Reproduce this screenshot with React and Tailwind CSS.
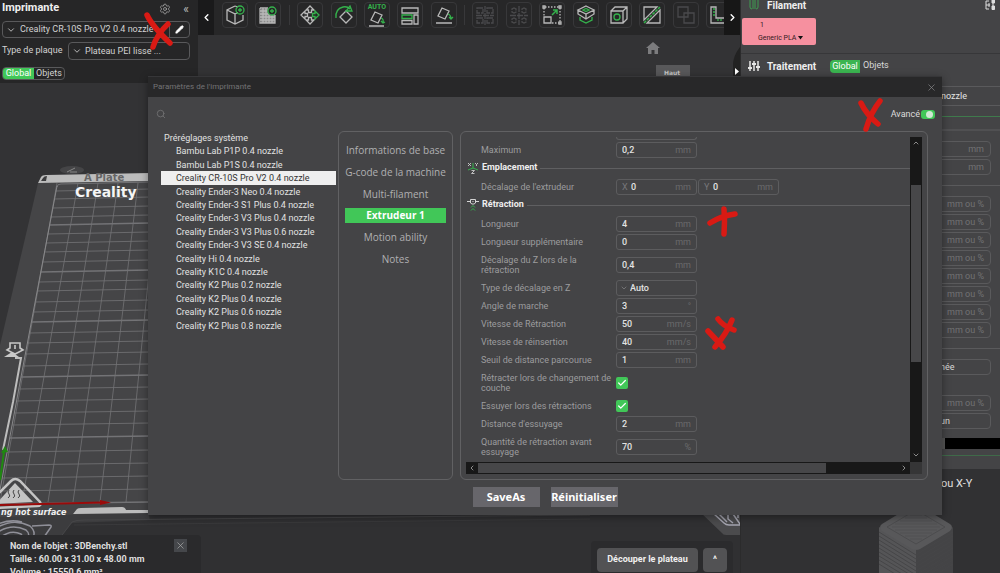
import { Check, ChevronDown, ChevronLeft, ChevronRight, ChevronUp, Pencil, Search, Settings, X } from "lucide-react";

const presets = [
  "Bambu Lab P1P 0.4 nozzle",
  "Bambu Lab P1S 0.4 nozzle",
  "Creality CR-10S Pro V2 0.4 nozzle",
  "Creality Ender-3 Neo 0.4 nozzle",
  "Creality Ender-3 S1 Plus 0.4 nozzle",
  "Creality Ender-3 V3 Plus 0.4 nozzle",
  "Creality Ender-3 V3 Plus 0.6 nozzle",
  "Creality Ender-3 V3 SE 0.4 nozzle",
  "Creality Hi 0.4 nozzle",
  "Creality K1C 0.4 nozzle",
  "Creality K2 Plus 0.2 nozzle",
  "Creality K2 Plus 0.4 nozzle",
  "Creality K2 Plus 0.6 nozzle",
  "Creality K2 Plus 0.8 nozzle",
];

const tabs = [
  "Informations de base",
  "G-code de la machine",
  "Multi-filament",
  "Extrudeur 1",
  "Motion ability",
  "Notes",
];

/* ---------- 3D VIEW ---------- */

const gridColumns = [
  [57, 0],
  [78, 22],
  [98, 48],
  [118, 73],
  [138, 100],
  [158, 126],
];

const gridRows = [
  191, 199, 208, 217, 225, 234, 243, 252, 262, 272, 282, 291, 302, 312, 322,
  333, 343, 354, 366, 377, 389, 401, 413, 425, 438, 452, 465, 478, 491, 504,
];

function Scene() {
  return (
    <svg
      className="absolute inset-0 h-full w-full"
      viewBox="0 0 740 573"
      preserveAspectRatio="xMinYMin slice"
      fill="none"
      aria-hidden="true"
    >
      <rect width="740" height="573" fill="#333335" />

      {/* printer body */}
      <path d="M0 515L740 515V573H0Z" fill="#303032" />
      <path d="M0 512H148L150 520L72 523L56 543L0 553Z" fill="#3c3c3e" />
      <path d="M56 543L72 522Q76 520 84 520L590 515" stroke="#464648" />
      <path d="M74 525L590 519" stroke="#3a3a3c" />

      {/* plate */}
      <path d="M38 183L150 181V512L0 517V345Z" fill="#454547" />
      <ellipse cx="72" cy="170" rx="12" ry="4" fill="#454547" />
      <path d="M67 172L75 168M70 172H77" stroke="#888" />
      <path d="M38 183L41 177Q42 175 46 175L150 173V181Z" fill="#bcbcbc" />
      <path d="M41 181L43 178Q44 176 47 176L46 181Z" fill="#3c3c3e" />
      <text x="84" y="181" fontFamily="DejaVu Sans" fontSize="10" fontWeight="700" fill="#666">A Plate</text>

      <g stroke="#737376" strokeWidth="0.8">
        {gridRows.map((y, i) => (
          <path
            key={y}
            d={`M${57 - (y - 183) * 0.185} ${y}L150 ${y - 2}`}
            strokeWidth={i % 5 === 4 ? 1.3 : 0.8}
          />
        ))}
        {gridColumns.map(([a, b]) => (
          <path key={a} d={`M${a} 183L${b} 502`} />
        ))}
      </g>
      <path d="M57 187Q57 184 61 184L150 182" stroke="#737376" />
      <path d="M57 186L21 377L0 490" stroke="#88888a" />
      <text x="75" y="197" fontFamily="DejaVu Sans" fontSize="14" fontWeight="700" fill="#f5f5f5">Creality</text>

      {/* lock mark on the left edge */}
      <path d="M10 343H20V348L23 350L15 354L7 350L10 348Z" stroke="#c8c8c8" strokeWidth="1.6" />
      <path d="M15 345V349" stroke="#c8c8c8" strokeWidth="1.6" />
      <path d="M4 357L12 352L19 357Z" fill="#c8c8c8" />
      <path d="M15 358H21L13 402L3 450" stroke="#bdbdbd" strokeWidth="2" />

      {/* hot surface sign */}
      <path d="M-4 496L11 481Q15 477 20 481L40 502Q42 506 37 506L-4 508" stroke="#c4c4c4" strokeWidth="2.5" />
      <path d="M15 483L33 502L-4 504Z" fill="#c4c4c4" />
      <path d="M9 490q-2 2 0 4t-1 4M14 490q-2 2 0 4t-1 4M19 490q-2 2 0 4t-1 4" stroke="#444" />
      <path d="M0 480L4 452" stroke="#1f8a10" strokeWidth="2" />
      <path d="M5 446L1 453L8 452Z" fill="#1f8a10" />
      <path d="M0 505L102 502.500" stroke="#9a0a0a" strokeWidth="2" />
      <path d="M100 500L111 502.500L100 505Z" fill="#9a0a0a" />
      <text x="1" y="515" fontFamily="DejaVu Sans" fontSize="8" fontWeight="700" fontStyle="italic" fill="#f0f0f0">ng hot surface</text>
      <path d="M73 514L77 509Q78 508 81 508L122 507Q125 507 126 510L148 510V513Z" fill="#bcbcbc" />

      {/* fingerprint */}
      <g stroke="#8f8f98" strokeWidth="1.500">
        <path d="M-2 527Q14 518 30 526Q37 532 32 540M-2 532Q12 523 26 530Q31 534 27 541M0 538Q10 529 21 534Q25 538 21 543M4 543Q10 535 17 539M-2 524Q10 519 22 522" />
        <path d="M32 526L49 525Q52 525 51 527L42 540L34 541" />
      </g>

      {/* right corner tag */}
      <path d="M700 512L722 533Q723 535 726 535H740V512Z" fill="#4b4b4d" />
      <path d="M714 514L724 523Q726 525 729 525H740M719 514L727 522M728 514V519L733 523M733 514L740 524M738 514V518" stroke="#a5a5b0" strokeWidth="1.500" />

      {/* view cube */}
      <path d="M656 65H690V78H656Z" fill="#58585a" />
      <text x="664" y="75" fontFamily="DejaVu Sans" fontSize="6" fontWeight="700" fill="#c5c5c5">Haut</text>

      {/* side handle */}
      <path d="M740 47Q733 56 733 65V78H740Z" fill="#222" />
      <path d="M735 68L739 71.500L735 75Z" fill="#fff" />
    </svg>
  );
}

/* ---------- TOOLBAR ICONS ---------- */

const icons = {
  addCube: (
    <>
      <path d="M12 3L4 7V17L12 21L20 17V12M12 3L15 4M4 7L12 11V21M12 11L15 9.500" />
      <g stroke="#35b24c"><circle cx="17" cy="7" r="4" /><path d="M17 5V9M15 7H19" /></g>
    </>
  ),
  addPlate: (
    <>
      <path d="M5 6H12V9H19V20H5Z" fill="#8c8c8c" stroke="none" />
      <path d="M4 5H12M4 5V20H19V12M4 8H11M4 11H19M4 14H19M4 17H19M7 5V20M10 5V20M13 12V20M16 12V20" />
      <circle cx="16" cy="8" r="4" fill="#272728" stroke="#35b24c" />
      <path d="M16 6V10M14 8H18" stroke="#35b24c" />
    </>
  ),
  move: (
    <>
      <path d="M12 3L16 7L13.500 7V9.500H10.500V7H8ZM12 21L8 17H10.500V14.500H13.500V17H16ZM3 12L7 8V10.500H9.500V13.500H7V16Z" />
      <path d="M21 12L17 8V10.500H14.500V13.500H17V16Z" stroke="#35b24c" />
    </>
  ),
  rotate: (
    <>
      <path d="M14 8L20 14L14 20L8 14Z" />
      <path d="M4 15Q3 6 11 4Q15 3 18 6M18 3L20 8L14 8Z" stroke="#35b24c" />
    </>
  ),
  autoOrient: (
    <>
      <path d="M10 9L17 12L13 20L6 17ZM4 23H19" />
      <path d="M16 15Q19 16 18 20M16 18L18 20L20 19" stroke="#35b24c" />
    </>
  ),
  arrange: (
    <>
      <path d="M4 5H20V10H4ZM16 12H20V21H16ZM4 17.500H14V21H4Z" />
      <path d="M4 12H14V15.500H4Z" stroke="#35b24c" />
    </>
  ),
  layFlat: (
    <>
      <path d="M10 5L17 8L13 16L6 13ZM4 20H20" />
      <path d="M16 11Q19 12 19 16M17 14L19 16L21 14" stroke="#35b24c" />
    </>
  ),
  splitObjects: (
    <path stroke="#4a4a4c" d="M4 5H10V10H4ZM14 5H20V10H14ZM4 15H10V20H4ZM14 15H20V20H14ZM12 3V22M3 12.500H21" strokeDasharray="6 1" />
  ),
  splitParts: (
    <path stroke="#4a4a4c" d="M5 6L7 5L9 6V9L7 10L5 9ZM15 6L17 5L19 6V9L17 10L15 9ZM5 16L7 15L9 16V19L7 20L5 19ZM15 16L17 15L19 16V19L17 20L15 19ZM12 3V22M3 12.500H21" strokeDasharray="6 1" />
  ),
  scale: (
    <>
      <path d="M4 14H11V20H4Z" />
      <path d="M5 4H19M20 5V19M4 5V13M12 20H19" strokeDasharray="1.500 1.500" />
      <path d="M3 3H5V5H3ZM19 3H21V5H19ZM19 19H21V21H19Z" />
      <path d="M12 12L17 7M13 7H17V11" stroke="#35b24c" strokeWidth="1.500" />
    </>
  ),
  hollow: (
    <>
      <path d="M12 3L20 7L12 11L4 7ZM4 7V11L12 16L20 11V7M12 11V16" />
      <path d="M9 7L12 5.500L15 7L12 8.500ZM6 14V17L12 20L18 17V14" stroke="#35b24c" />
    </>
  ),
  hole: (
    <>
      <path d="M4 8H16V20H4ZM4 8L8 4H20V16L16 20M16 8L20 4" />
      <circle cx="10" cy="14" r="3" stroke="#35b24c" />
    </>
  ),
  cut: (
    <>
      <path d="M4 17V4H17ZM7 20H20V7Z" />
      <path d="M4 20L20 4" stroke="#35b24c" strokeDasharray="3 1" strokeWidth="1.500" />
    </>
  ),
  boolean: <path stroke="#4a4a4c" d="M4 4H14V14H4ZM10 10H20V20H10Z" />,
  measure: (
    <>
      <path d="M4 4H9V15H20V20H4Z" />
      <path d="M6 6H8M6 9H8M6 12H8M11 16V18M14 16V18" stroke="#35b24c" />
    </>
  ),
};

const toolbar = [
  ["addCube", "Ajouter un objet"],
  ["addPlate", "Ajouter un plateau"],
  null,
  ["move", "Déplacer"],
  ["rotate", "Pivoter"],
  ["autoOrient", "Orientation auto"],
  ["arrange", "Organiser"],
  ["layFlat", "Poser à plat"],
  null,
  ["splitObjects", "Scinder en objets"],
  ["splitParts", "Scinder en pièces"],
  ["scale", "Échelle"],
  ["hollow", "Évider"],
  ["hole", "Percer"],
  ["cut", "Couper"],
  ["boolean", "Opérations booléennes"],
  ["measure", "Mesurer"],
];

function Toolbar() {
  return (
    <nav className="flex h-[35px] min-w-0 flex-1 bg-[#272728]">
      <button className="flex w-4 shrink-0 items-center justify-center bg-[#1a1a1b] text-white" aria-label="Précédent">
        <ChevronLeft size={11} strokeWidth={3} />
      </button>
      <div className="min-w-0 flex-1 overflow-hidden pl-2 pt-[2px]">
        <div className="-mr-2 flex items-center justify-between">
          {toolbar.map((tool, i) =>
            tool ? (
              <button
                key={tool[0]}
                aria-label={tool[1]}
                className="relative flex h-[26px] w-[26px] shrink-0 items-center justify-center rounded border border-[#38383a]"
              >
                <svg width="24" height="24" viewBox="0 0 24 24" fill="none" stroke="#b8b8b8" strokeWidth="1.300" className="shrink-0">
                  {icons[tool[0]]}
                </svg>
                {tool[0] === "autoOrient" && (
                  <span className="absolute inset-x-0 top-0 text-center text-[7px] leading-[8px] font-bold text-[#35b24c]">
                    AUTO
                  </span>
                )}
              </button>
            ) : (
              <span key={i} className="h-5 w-px shrink-0 bg-[#38383a]" />
            )
          )}
        </div>
      </div>
      <button className="flex w-4 shrink-0 items-center justify-center bg-[#171717] text-white" aria-label="Suivant">
        <ChevronRight size={11} strokeWidth={3} />
      </button>
    </nav>
  );
}

/* ---------- LEFT SIDEBAR ---------- */

function PrinterPanel() {
  return (
    <aside className="h-[83px] w-[198px] shrink-0 bg-[#262627] pl-[2px] pr-2 text-[#d2d2d2]">
      <div className="flex h-[17px] items-center">
        <h2 className="flex-1 text-[11px] font-bold text-[#efefef]">Imprimante</h2>
        <button aria-label="Réglages"><Settings size={12} strokeWidth={1.5} className="text-[#aaa]" /></button>
        <button aria-label="Réduire" className="ml-[11px] w-2 text-center text-xs leading-[12px] text-[#bbb]">«</button>
      </div>

      <div className="mt-1 flex h-[17px] rounded border border-[#59595b]">
        <div className="relative min-w-0 flex-1">
          <ChevronDown size={10} className="absolute left-[3px] top-[3px]" />
          <select aria-label="Imprimante" className="block h-full w-full appearance-none pl-[17px] text-[9px] leading-[15px]">
            <option>Creality CR-10S Pro V2 0.4 nozzle</option>
          </select>
        </div>
        <button aria-label="Modifier" className="flex w-5 items-center justify-center border-l border-[#59595b]">
          <Pencil size={9} fill="#fff" className="text-white" />
        </button>
      </div>

      <div className="mt-1 flex h-[18px] items-center">
        <label htmlFor="plate" className="flex-1 text-[9px]">Type de plaque</label>
        <div className="relative h-[18px] w-[122px] rounded border border-[#59595b]">
          <ChevronDown size={10} className="absolute left-[3px] top-[3px]" />
          <select id="plate" className="block h-full w-full appearance-none pl-4 text-[9px] leading-[16px]">
            <option>Plateau PEI lisse ...</option>
          </select>
        </div>
      </div>

      <div className="mt-[7px] flex h-[13px] w-[63px] overflow-hidden rounded border border-[#59595b] text-[9px] leading-[11px]">
        <button className="w-[31px] bg-[#41c758] text-white">Global</button>
        <button className="flex-1">Objets</button>
      </div>
    </aside>
  );
}

/* ---------- RIGHT SIDEBAR ---------- */

function SideField({ unit, name }) {
  return (
    <div className="mb-[2px] flex h-4 items-center rounded border border-[#5a5a5c] px-[6px]">
      <input aria-label={name} className="h-full w-0 flex-1 text-[9px]" />
      <span className="text-[9px] leading-[14px] text-[#727274]">{unit}</span>
    </div>
  );
}

function ProcessPanel() {
  return (
    <aside className="flex w-[260px] shrink-0 flex-col overflow-hidden border-l border-[#2b2b2c] bg-[#444446] text-[#d8d8d8]">
      <div className="flex h-[10px] items-center pl-2 pr-[5px]">
        <svg width="10" height="12" viewBox="0 0 10 12" fill="none" stroke="#3f9d50">
          <path d="M1 0V8Q1 10 3 10M4 0V10M6 0V10M9 0V8Q9 10 7 10" />
        </svg>
        <h2 className="ml-2 flex-1 text-[10px] font-bold text-[#efefef]">Filament</h2>
        <svg width="10" height="10" viewBox="0 0 10 10" fill="none" stroke="#ddd">
          <path d="M4 1H1V9H4M1 5H5M4 3V7" />
          <path d="M7 0H9.500V3H7ZM7 6H9.500V9.500H7ZM8 3V6" fill="#ddd" />
        </svg>
      </div>

      <button className="ml-px mt-2 block h-[27px] w-[74px] shrink-0 rounded-[2px] bg-[#f6909f] pl-4 text-left text-[7px] leading-[13px] text-[#33191d]">
        <span className="block pl-[2px]">1</span>
        <span className="flex items-center gap-[2px]">
          Generic PLA
          <svg width="5" height="4" viewBox="0 0 5 4"><path d="M0 0H5L2.500 3.500Z" fill="#111" /></svg>
        </span>
      </button>

      <div className="mt-2 flex h-[25px] shrink-0 items-center border-t border-[#373739] pl-[7px]">
        <svg width="12" height="12" viewBox="0 0 12 12" fill="none" stroke="#e6e6e6" strokeWidth="1.500">
          <path d="M2 1V11M6 1V11M10 1V11" />
          <path d="M0 8H4M4 4H8M8 7H12" strokeWidth="2" />
        </svg>
        <h2 className="ml-[7px] w-[63px] text-[10px] font-bold text-[#efefef]">Traitement</h2>
        <button className="h-[13px] w-[30px] rounded-l bg-[#3bb550] text-[9px] text-white">Global</button>
        <button className="ml-[3px] text-[9px]">Objets</button>
      </div>

      <div className="mt-2 ml-[10px] h-5 shrink-0 border-y border-[#5a5a5c]">
        <select aria-label="Profil" className="block h-full w-full appearance-none pl-[190px] text-[9px] leading-[18px] text-[#e4e4e4]">
          <option>nozzle</option>
        </select>
      </div>
      <div className="mt-[10px] h-px shrink-0 bg-[#3f7a4c]" />
      <div className="mt-3 h-[2px] shrink-0 bg-[#505052]" />

      <div className="mt-[10px] shrink-0 pl-[110px] pr-[9px]">
        <SideField unit="mm" name="Hauteur de couche" />
        <SideField unit="mm" name="Première couche" />
      </div>
      <div className="mt-2 h-px shrink-0 bg-[#5a5a5c]" />
      <div className="mt-[10px] shrink-0 pl-[110px] pr-[9px]">
        {["a", "b", "c", "d", "e", "f", "g", "h"].map((k) => (
          <SideField key={k} unit="mm ou %" name={"Largeur " + k} />
        ))}
      </div>
      <div className="mt-2 h-px shrink-0 bg-[#5a5a5c]" />
      <div className="mt-[10px] shrink-0 pl-[110px] pr-[9px] text-[9px] leading-[14px]">
        <select aria-label="Position de la couture" className="block h-4 w-full appearance-none rounded border border-[#5a5a5c] pl-[88px]">
          <option>née</option>
        </select>
        <div className="mt-5">
          <SideField unit="mm ou %" name="Écart" />
        </div>
        <select aria-label="Type" className="block h-4 w-full appearance-none rounded border border-[#5a5a5c] pl-[88px]">
          <option>un</option>
        </select>
      </div>
      <div className="mt-[9px] flex h-[11px] shrink-0 bg-black pl-[200px]">
        <span className="w-1 bg-[#555]" />
      </div>
      <div className="mt-[6px] h-px shrink-0 bg-[#3f6a49]" />

      <div className="mt-[13px] flex-1 bg-[#313133]">
        <p className="pl-[200px] pt-[7px] text-[11px] leading-[15px] text-[#e0e0e0]">ou X-Y</p>
        <svg width="76" height="76" viewBox="0 0 76 76" fill="none" className="ml-[137px] mt-[10px]">
          <path d="M1 26L38 49V76H1Z" fill="#555557" />
          <path d="M75 26L38 49V76H75Z" fill="#444446" />
          <path d="M38 4Q41 4 44 6L72 23Q76 26 72 30L42 48Q38 50 34 48L4 30Q0 26 4 23L32 6Q35 4 38 4Z" fill="#58585a" />
          <path d="M38 9L67 26L38 43L9 26Z" stroke="#4c4c4e" />
          <path d="M32 14H44M27 17H49M22 20H54M17 23H59M14 26H62M17 29H59M22 32H54M27 35H49M32 38H44" stroke="#505052" />
          <path d="M1 31L38 54L75 31M1 35L38 58L75 35M1 39L38 62L75 39M1 43L38 66L75 43M1 47L38 70L75 47M1 51L38 74L75 51M1 55L36 76M75 55L41 76M1 59L29 76M75 59L47 76M1 63L22 76M75 63L54 76" stroke="#464648" />
        </svg>
      </div>
    </aside>
  );
}

/* ---------- DIALOG ---------- */

function Box({ id, value, unit, prefix, label }) {
  return (
    <div className="flex h-4 w-[81px] shrink-0 items-center rounded-[3px] border border-[#5c5c5e] px-[5px] text-[9px] leading-[14px]">
      {prefix && <span className="w-[9px] text-[#77777a]">{prefix}</span>}
      <input id={id} aria-label={label} defaultValue={value} className="h-full w-0 flex-1 font-medium text-[#e2e2e2]" />
      <span className="text-[#6a6a6c]">{unit}</span>
    </div>
  );
}

function Row({ id, label, tall, children }) {
  return (
    <div className={tall ? "flex h-7 items-center pl-[15px]" : "flex h-[18px] items-center pl-[15px]"}>
      <label htmlFor={id} className="w-[135px] shrink-0 text-[9px] leading-[10px] text-[#9c9c9e]">
        {label}
      </label>
      {children}
    </div>
  );
}

function Section({ icon, title }) {
  return (
    <div className="mb-px flex h-[18px] items-center pl-px">
      {icon}
      <h3 className="ml-[3px] text-[9px] font-bold text-[#eee]">{title}</h3>
      <span className="ml-[3px] h-px flex-1 bg-[#5f5f61]" />
    </div>
  );
}

function Tick({ id }) {
  return (
    <span className="relative flex h-3 w-3">
      <input id={id} type="checkbox" defaultChecked className="h-3 w-3 appearance-none rounded-[2px] bg-[#41c758]" />
      <Check size={10} strokeWidth={3} className="pointer-events-none absolute left-px top-px text-white" />
    </span>
  );
}

const axesIcon = (
  <svg width="12" height="12" viewBox="0 0 12 12" fill="none">
    <path d="M1 1L4 4M4 1L1 4M8 1L9.500 2.500L11 1M9.500 2.500V4M4.500 8.500H7.500L4.500 11.500H7.500" stroke="#ccc" strokeWidth="0.9" />
    <path d="M6 1V6L1 8M6 6L11 8" stroke="#35b24c" />
  </svg>
);

const retractIcon = (
  <svg width="12" height="12" viewBox="0 0 12 12" fill="none">
    <path d="M0 2.500H3M9 2.500H12M3.500 0.500H8.500V4L7 5H5L3.500 4ZM6 2V3" stroke="#d5d5d5" />
    <path d="M4 8.500L6 6.500L8 8.500M4 11.500L6 9.500L8 11.500" stroke="#35b24c" />
  </svg>
);

function ExtruderForm() {
  return (
    <div className="min-h-0 min-w-0 flex-1 overflow-hidden">
      <div className="mb-px ml-[150px] h-[3px] w-[81px] rounded-b-[3px] border border-t-0 border-[#5c5c5e]" />
      <Row id="max" label="Maximum"><Box id="max" value="0,2" unit="mm" /></Row>
      <Section icon={axesIcon} title="Emplacement" />
      <Row id="offx" label="Décalage de l'extrudeur">
        <div className="flex gap-px">
          <Box id="offx" prefix="X" value="0" unit="mm" />
          <Box label="Décalage Y" prefix="Y" value="0" unit="mm" />
        </div>
      </Row>
      <Section icon={retractIcon} title="Rétraction" />
      <Row id="len" label="Longueur"><Box id="len" value="4" unit="mm" /></Row>
      <Row id="extra" label="Longueur supplémentaire"><Box id="extra" value="0" unit="mm" /></Row>
      <Row id="zhop" label="Décalage du Z lors de la rétraction" tall><Box id="zhop" value="0,4" unit="mm" /></Row>
      <Row id="ztype" label="Type de décalage en Z">
        <div className="relative h-4 w-[81px] rounded-[3px] border border-[#5c5c5e] text-[9px] leading-[14px]">
          <ChevronDown size={8} className="absolute left-[3px] top-[3px] text-[#8a8a8c]" />
          <select id="ztype" className="block h-full w-full appearance-none pl-[13px] font-medium text-[#e2e2e2]">
            <option>Auto</option>
          </select>
        </div>
      </Row>
      <Row id="angle" label="Angle de marche"><Box id="angle" value="3" unit="°" /></Row>
      <Row id="vret" label="Vitesse de Rétraction"><Box id="vret" value="50" unit="mm/s" /></Row>
      <Row id="vins" label="Vitesse de réinsertion"><Box id="vins" value="40" unit="mm/s" /></Row>
      <Row id="seuil" label="Seuil de distance parcourue"><Box id="seuil" value="1" unit="mm" /></Row>
      <Row id="layer" label="Rétracter lors de changement de couche" tall><Tick id="layer" /></Row>
      <Row id="wipe" label="Essuyer lors des rétractions"><Tick id="wipe" /></Row>
      <Row id="dist" label="Distance d'essuyage"><Box id="dist" value="2" unit="mm" /></Row>
      <Row id="qty" label="Quantité de rétraction avant essuyage" tall><Box id="qty" value="70" unit="%" /></Row>
    </div>
  );
}

function PrinterDialog() {
  return (
    <div
      role="dialog"
      aria-label="Paramètres de l'imprimante"
      className="absolute left-[148px] right-[58px] top-[76px] flex flex-col border-t border-[#363638] bg-[#444446] shadow-[0_2px_8px_rgba(0,0,0,0.4)]"
    >
      <header className="flex h-5 items-center justify-between bg-[#282829] px-[5px] text-[8px] text-[#737375]">
        <span>Paramètres de l'imprimante</span>
        <button aria-label="Fermer"><X size={11} strokeWidth={1.5} className="text-[#8a8a8c]" /></button>
      </header>

      <div className="flex h-[34px] items-center justify-between pl-2 pr-[7px]">
        <button aria-label="Rechercher"><Search size={10} className="text-[#727274]" /></button>
        <label className="flex items-center gap-px text-[9px] leading-[10px] text-[#dcdcdc]">
          Avancé
          <span className="relative flex h-[9px] w-[14px]">
            <input type="checkbox" defaultChecked className="h-[9px] w-[14px] appearance-none rounded-[3px] bg-[#41c758]" />
            <span className="absolute right-[2px] top-px h-[7px] w-[7px] rounded-full bg-[#d0e8d4]" />
          </span>
        </label>
      </div>

      <div className="flex pl-[13px] pr-[14px]">
        {/* PRESETS */}
        <div className="w-[175px] shrink-0 text-[9px] leading-[14px] text-[#e2e2e2]">
          <ul className="grid h-[201px] auto-rows-[minmax(0,1fr)]">
            <li className="pl-[3px]">Préréglages système</li>
            {presets.map((name, i) => (
              <li key={name} className={i === 2 ? "bg-[#efefef] pl-[15px] text-[#333]" : "pl-[15px]"}>
                {name}
              </li>
            ))}
          </ul>
        </div>

        {/* TABS */}
        <div className="ml-[2px] w-[115px] shrink-0 rounded-md border border-[#616163] px-[6px] pt-2 font-['Open_Sans',sans-serif]">
          <ul className="grid h-[130px] auto-rows-fr items-center">
            {tabs.map((tab) => (
              <li key={tab} className="flex">
                <button
                  className={
                    tab === "Extrudeur 1"
                      ? "h-[15px] flex-1 bg-[#41c758] text-[10px] leading-[15px] font-bold text-white"
                      : "h-[15px] flex-1 text-[10px] leading-[15px] whitespace-nowrap text-[#b0b0b2]"
                  }
                >
                  {tab}
                </button>
              </li>
            ))}
          </ul>
        </div>

        {/* SETTINGS */}
        <div className="ml-[7px] h-[349px] min-w-0 flex-1 rounded-md border border-[#616163] p-[5px]">
          <div className="flex h-[325px]">
            <ExtruderForm />
            <div className="flex w-3 flex-col bg-[#181818] px-px text-[#8a8a8a]">
              <button aria-label="Haut" className="h-12 pb-9"><ChevronUp size={8} strokeWidth={3} className="mx-auto" /></button>
              <span className="h-[177px] bg-[#474749]" />
              <button aria-label="Bas" className="mt-auto pb-[3px]"><ChevronDown size={8} strokeWidth={3} className="mx-auto" /></button>
            </div>
          </div>
          <div className="flex h-3">
            <div className="flex flex-1 bg-[#181818] py-px text-[#8a8a8a]">
              <button aria-label="Gauche" className="w-3 pl-[2px]"><ChevronLeft size={8} strokeWidth={3} /></button>
              <span className="w-[348px] bg-[#474749]" />
              <button aria-label="Droite" className="ml-auto pr-[2px]"><ChevronRight size={8} strokeWidth={3} /></button>
            </div>
            <span className="w-3 bg-[#353536]" />
          </div>
        </div>
      </div>

      <footer className="flex justify-center gap-[11px] pt-[7px] pb-2 font-['Noto_Sans',sans-serif] text-[11px] leading-5 font-bold text-white">
        <button className="w-[67px] bg-[#67666b]">SaveAs</button>
        <button className="w-[67px] bg-[#67666b]">Réinitialiser</button>
      </footer>
    </div>
  );
}

/* ---------- HAND-DRAWN MARKS ---------- */

function Marks() {
  return (
    <svg
      className="pointer-events-none absolute left-0 top-0"
      width="1000"
      height="573"
      viewBox="0 0 1000 573"
      fill="none"
      stroke="#d91a14"
      strokeWidth="5.500"
      strokeLinecap="round"
      strokeLinejoin="round"
      aria-hidden="true"
    >
      <path d="M147 15Q152 26 170 43M168 24Q157 34 153 47" />
      <path d="M861 103Q866 114 878 124M880 101Q871 112 866 129" />
      <path d="M710 223Q721 216 735 214M724 209Q725 222 724 234" />
      <path d="M718 319Q723 326 734 330M732 320Q727 333 715 347M708 331L723 347" />
    </svg>
  );
}

export default function App() {
  return (
    <div className="relative flex h-screen overflow-hidden bg-[#333335] font-['Roboto',sans-serif]">
      <main className="relative flex min-w-0 flex-1 flex-col overflow-hidden">
        <Scene />

        <div className="relative flex items-start">
          <PrinterPanel />
          <Toolbar />
        </div>

        <button aria-label="Vue par défaut" className="absolute right-20 top-[42px]">
          <svg width="14" height="12" viewBox="0 0 14 12">
            <path d="M7 0L14 6H12V12H8.500V8H5.500V12H2V6H0Z" fill="#7c7c7e" />
          </svg>
        </button>

        {/* BOTTOM BAR */}
        <div className="relative mt-auto flex items-end justify-between">
          <div className="flex h-[38px] w-[201px] justify-between overflow-hidden rounded-tr bg-[#2a2a2c] pl-[10px] pr-[14px] text-[9px] leading-[13px] font-bold text-[#dedede]">
            <div className="pt-[5px]">
              <p>Nom de l'objet : 3DBenchy.stl</p>
              <p>Taille : 60.00 x 31.00 x 48.00 mm</p>
              <p>Volume : 15550.6 mm³</p>
            </div>
            <button aria-label="Fermer" className="mt-1 flex h-[13px] w-[13px] items-center justify-center bg-[#45474b]">
              <X size={11} strokeWidth={1.5} className="text-[#aaa]" />
            </button>
          </div>

          <div className="mr-[7px] flex h-8 gap-[5px] rounded-t bg-[#2b2b2d] px-[6px] pt-[7px] text-[9px] font-bold text-[#f0f0f0]">
            <button className="h-6 w-[101px] rounded bg-[#525254]">Découper le plateau</button>
            <button className="h-6 w-6 rounded bg-[#525254]" aria-label="Options">^</button>
          </div>
        </div>
      </main>

      <ProcessPanel />
      <PrinterDialog />
      <Marks />
    </div>
  );
}
